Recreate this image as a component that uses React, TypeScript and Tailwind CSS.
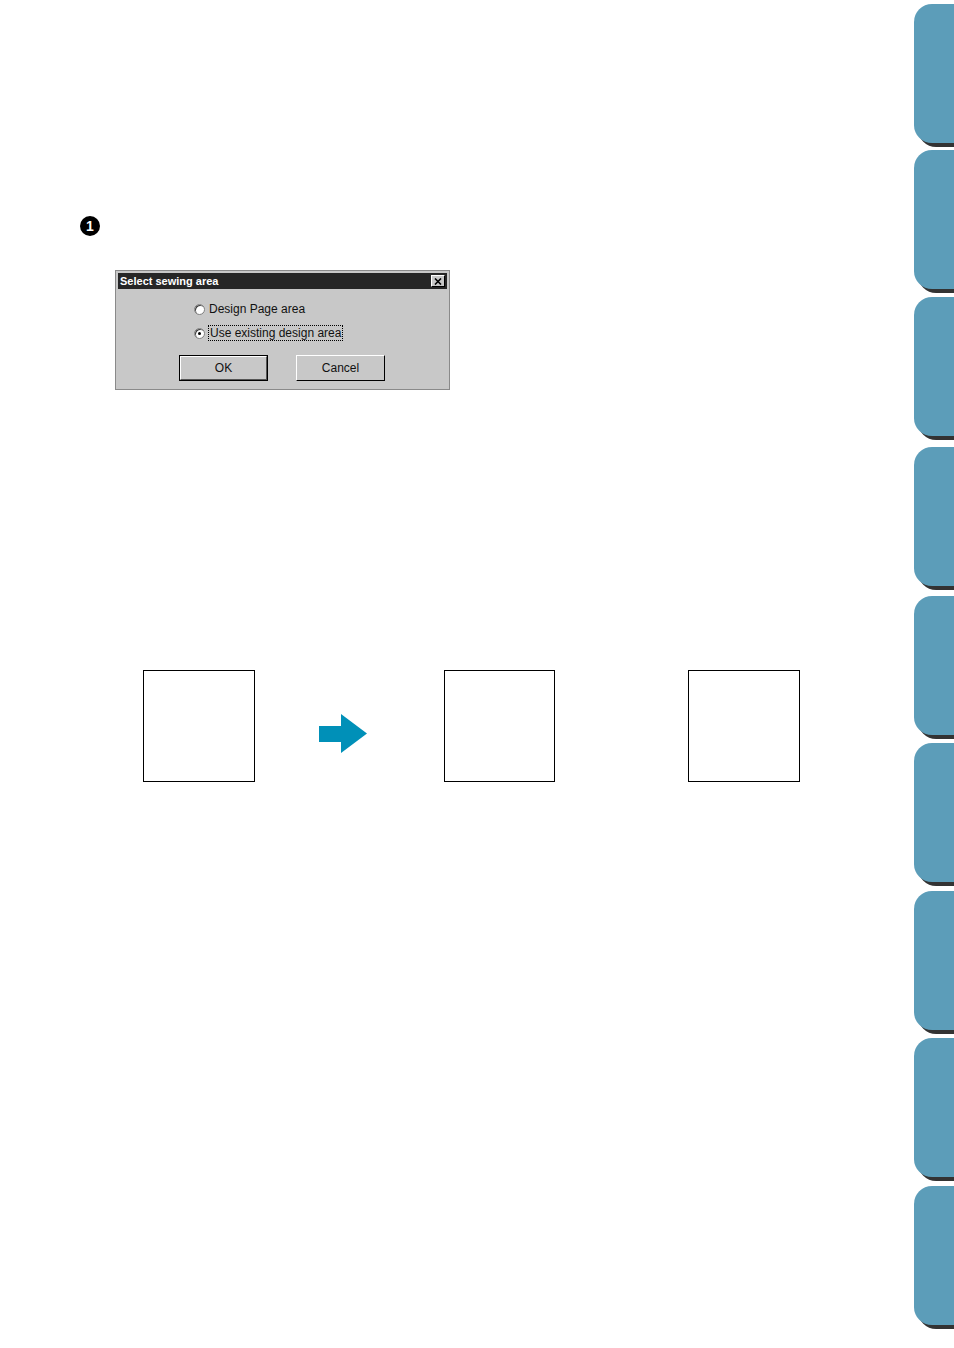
const tabs = [
  'mt-[4px]',
  'mt-[7px]',
  'mt-[8px]',
  'mt-[11px]',
  'mt-[10px]',
  'mt-[8px]',
  'mt-[9px]',
  'mt-[8px]',
  'mt-[9px]',
]

function Radio({ checked }: { checked?: boolean }) {
  return (
    <span className="relative inline-block w-[11px] h-[11px] rounded-full bg-white border border-[#808080] shadow-[inset_1px_1px_0_#404040]">
      {checked && <span className="absolute left-[3px] top-[3px] w-[3px] h-[3px] rounded-full bg-black" />}
    </span>
  )
}

function Dialog() {
  return (
    <div className="w-[335px] h-[120px] border border-[#8a8a8a] bg-[#c8c8c8] p-[2px] flex flex-col font-['Liberation_Sans',Arial,sans-serif]">
      <div className="h-[16px] bg-[#262626] flex items-center justify-between pl-[2px] pr-[2px]">
        <span className="text-white text-[11px] font-bold leading-none">Select sewing area</span>
        <span className="w-[14px] h-[12px] bg-[#c8c8c8] border border-t-white border-l-white border-b-black border-r-black flex items-center justify-center">
          <svg width="8" height="7" viewBox="0 0 8 7">
            <path d="M1 0.5 L7 6.5 M7 0.5 L1 6.5" stroke="#000" strokeWidth="1.6" />
          </svg>
        </span>
      </div>
      <div className="flex flex-col pl-[76px] pt-[13px] gap-[9px] text-[12px] text-[#111]">
        <div className="flex items-center gap-[4px] h-[14px]">
          <Radio />
          <span>Design Page area</span>
        </div>
        <div className="flex items-center gap-[3px] h-[16px]">
          <Radio checked />
          <span className="border border-dotted border-black px-[1px] leading-[14px]">Use existing design area</span>
        </div>
      </div>
      <div className="flex pl-[61px] gap-[28px] mt-[14px] text-[12px] text-[#111]">
        <div className="w-[89px] h-[26px] border border-black">
          <div className="w-full h-full border border-t-white border-l-white border-b-[#555] border-r-[#555] flex items-center justify-center">OK</div>
        </div>
        <div className="w-[89px] h-[26px] border border-t-white border-l-white border-b-black border-r-black flex items-center justify-center">
          Cancel
        </div>
      </div>
    </div>
  )
}

function Arrow() {
  return (
    <svg width="48" height="40" viewBox="0 0 48 40">
      <path d="M0 12 H22 V0 L48 19.5 L22 39 V28 H0 Z" fill="#0090b8" />
    </svg>
  )
}

export default function App() {
  return (
    <div className="w-[954px] h-[1348px] bg-white flex overflow-hidden">
      <div className="flex-1 flex flex-col">
        <div className="mt-[216px] ml-[80px] w-[20px] h-[20px] rounded-full bg-black flex items-center justify-center text-white text-[14px] font-bold font-['Liberation_Sans',Arial,sans-serif] leading-none">
          1
        </div>
        <div className="mt-[34px] ml-[115px]">
          <Dialog />
        </div>
        <div className="mt-[280px] ml-[143px] flex items-start">
          <div className="w-[112px] h-[112px] border border-black" />
          <div className="ml-[64px] mt-[44px]">
            <Arrow />
          </div>
          <div className="ml-[77px] w-[111px] h-[112px] border border-black" />
          <div className="ml-[133px] w-[112px] h-[112px] border border-black" />
        </div>
      </div>
      <div className="w-[40px] flex flex-col">
        {tabs.map((m, i) => (
          <div
            key={i}
            className={`${m} h-[139px] rounded-l-[18px] bg-[#5c9db9] shadow-[4px_4px_0_#333333] shrink-0`}
          />
        ))}
      </div>
    </div>
  )
}
